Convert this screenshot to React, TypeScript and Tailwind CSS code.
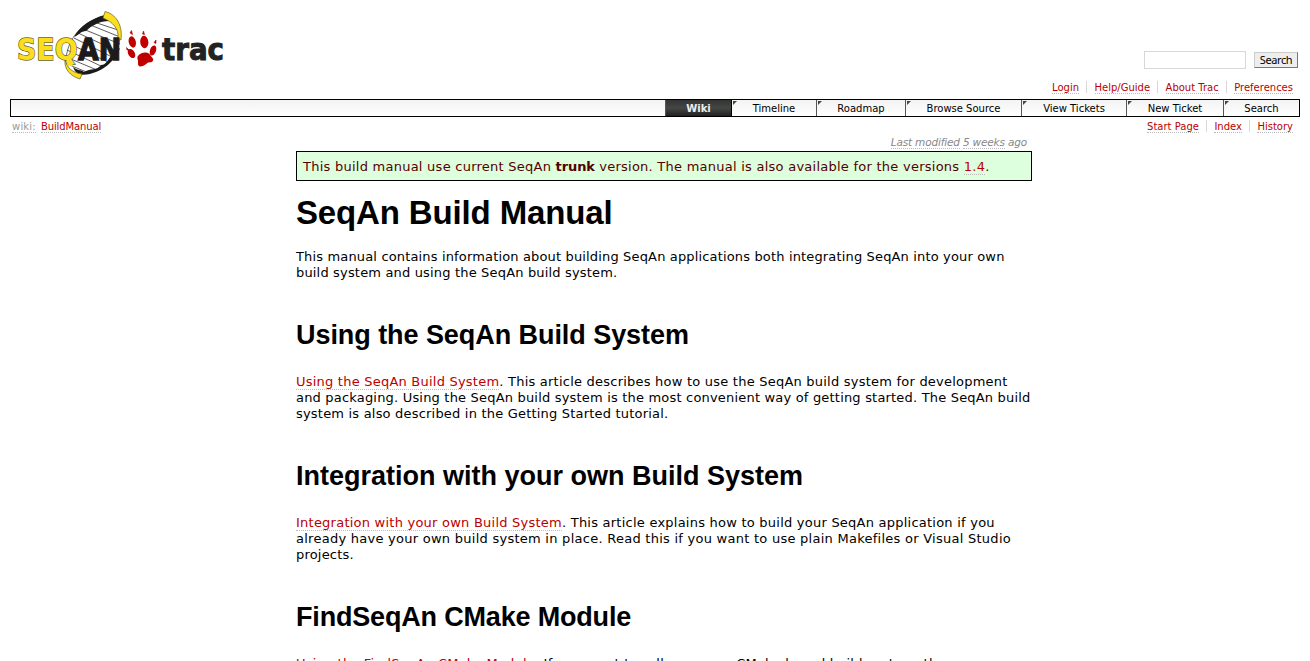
import type { ReactNode } from "react";

const link = "text-[#bb0000] border-b border-dotted border-[#bbbbbb]";

function Logo() {
  return (
    <svg className="block" width="240" height="99" viewBox="0 0 240 99">
      <path d="M66 62C66 40 82 21 105 16C112 18 118 25 120 34C120 56 106 70 79 74C72 73 67 68 66 62Z" fill="#fff" stroke="#333" strokeWidth=".7" />
      <path d="M94 22L118 30M88 24L120 37M83 29L120 44M78 33L117 51M74 38L112 57M70 44L108 62M67 50L103 67M66 57L97 70M67 64L89 73" stroke="#333" strokeWidth=".8" fill="none" />
      <path d="M74 37C80 26 92 18 105 15L110 21C99 21 91 26 86 31C81 31 79 35 74 37Z" fill="#1c1a1b" />
      <path d="M73 67C78 71 80 69 84 72C91 68 97 71 101 65C106 65 108 60 112 54L120 48C114 64 98 75 80 75C76 73 74 70 73 67Z" fill="#1c1a1b" />
      <path d="M105 11.500C116 14 123 25 121 40L118 38C119 29 113 22 103 18Z" fill="#fbdf1f" stroke="#66601f" strokeWidth=".7" />
      <text x="17" y="60" fontFamily="DejaVu Sans" fontWeight="700" fontSize="29.500" textLength="60.500" lengthAdjust="spacingAndGlyphs" fill="#fbdf1f" stroke="#66601f" strokeWidth="1.400" paintOrder="stroke">SEQ</text>
      <path d="M65 60C67 68 73 73 82 74L80 79C70 76 64 69 65 60Z" fill="#fbdf1f" stroke="#66601f" strokeWidth=".7" />
      <path d="M66 58L71 58L73 66L67.500 66Z" fill="#fbdf1f" />
      <text x="78" y="60" fontFamily="DejaVu Sans" fontWeight="700" fontSize="29.500" textLength="43" lengthAdjust="spacingAndGlyphs" fill="#1c1a1b" stroke="#1c1a1b" strokeWidth="1.300">AN</text>
      <g fill="#c00000">
        <ellipse cx="132.300" cy="42" rx="3.500" ry="5.800" transform="rotate(-15 132.300 42)" />
        <ellipse cx="144.300" cy="42" rx="4.100" ry="6.200" transform="rotate(-5 144.300 42)" />
        <ellipse cx="131.500" cy="53.500" rx="3.200" ry="5" transform="rotate(-32 131.500 53.500)" />
        <ellipse cx="153" cy="50.500" rx="3" ry="5.200" transform="rotate(20 153 50.500)" />
        <path d="M145 52.500C150 52 151 57 153 58.500C154 62 151 62.500 148 62.500C146 64 144 66.500 140.500 66.500C136.500 66 139 62 137.500 59C136.500 55.500 141 52.500 145 52.500Z" />
        <path d="M131.500 30.500L132.500 34.500L130 33ZM143.500 31L144.500 34.500L142.500 34ZM156 40L156 43.500L154 42.500ZM126.500 47.500L129 50L127 50Z" stroke="#c00000" strokeWidth=".6" />
      </g>
      <text x="162" y="59.500" fontFamily="DejaVu Sans" fontWeight="700" fontSize="31" textLength="62" lengthAdjust="spacingAndGlyphs" fill="#222" stroke="#222" strokeWidth="1">trac</text>
    </svg>
  );
}

function Links({ items }: { items: string[] }) {
  return (
    <div className="flex justify-end pr-[7px] text-[10px] leading-[13px]">
      {items.map((t, i) => (
        <span key={t} className={i ? "ml-[7px] h-[12px] border-l border-[#d7d7d7] pl-[7.5px]" : ""}>
          <a className={`inline-block h-[13px] ${link}`}>{t}</a>
        </span>
      ))}
    </div>
  );
}

const tabs = [
  ["Timeline", "w-[84px]"],
  ["Roadmap", "w-[89px]"],
  ["Browse Source", "w-[116px]"],
  ["View Tickets", "w-[105px]"],
  ["New Ticket", "w-[97px]"],
  ["Search", "w-[76px]"],
];

function Line({ tracking, children }: { tracking: string; children: ReactNode }) {
  return <span className={`block whitespace-nowrap ${tracking}`}>{children}</span>;
}

function H2({ tracking, children }: { tracking: string; children: ReactNode }) {
  return <h2 className={`mt-[38px] font-['Liberation_Sans',sans-serif] text-[27px] leading-[32px] font-bold whitespace-nowrap ${tracking}`}>{children}</h2>;
}

export default function App() {
  return (
    <div className="h-[661px] overflow-hidden bg-white font-['DejaVu_Sans',sans-serif] text-[13px] leading-[16px] text-black">
      <header className="flex h-[99px] justify-between">
        <Logo />
        <div className="flex flex-col pt-[51px] pr-[10px]">
          <form className="flex justify-end gap-2 pr-[2px]">
            <input className="h-[18px] w-[102px] border border-[#d7d7d7]" />
            <button type="button" className="mt-px h-[16px] w-[44px] border border-t-[#cccccc] border-r-[#777777] border-b-[#777777] border-l-[#cccccc] bg-[#eeeeee] font-['Noto_Sans',sans-serif] text-[11px] leading-[14px] tracking-[-0.4px]">Search</button>
          </form>
          <div className="mt-[12px]"><Links items={["Login", "Help/Guide", "About Trac", "Preferences"]} /></div>
        </div>
      </header>
      <nav className="mx-[10px] flex h-[18px] justify-end border border-black bg-linear-to-b from-[#f3f3f3] to-white text-[10px] leading-[17px]">
        <span className="w-[67px] border-x border-x-[#555555] border-r-black bg-linear-to-b from-[#333333] via-[#444744] to-[#222222] text-center font-bold text-[#eeeeee]">Wiki</span>
        {tabs.map(([t, w], i) => (
          <span key={t} className={`relative text-center ${w} ${i ? "border-l border-[#555555]" : ""}`}>
            <svg className="absolute top-[1px] left-[1px]" width="4" height="4"><path d="M0 0H4L0 4Z" fill="#444" /></svg>
            {t}
          </span>
        ))}
      </nav>
      <div className="flex h-[20px] justify-between px-[10px] pt-[3px] text-[10px] leading-[13px]">
        <div className="flex gap-[5px] pl-[2px] text-[#999999]"><span className="h-[13px] border-b border-dotted border-[#bbbbbb] tracking-[0.2px]">wiki:</span><a className={`h-[13px] tracking-[-0.1px] ${link}`}>BuildManual</a></div>
        <Links items={["Start Page", "Index", "History"]} />
      </div>
      <main className="ml-[296px] w-[736px]">
        <p className="h-[14px] pr-[5px] text-right text-[10.5px] leading-[11px] tracking-[-0.17px] text-[#888888] italic"><span className="inline-block border-b border-dotted border-[#bbbbbb]">Last modified</span> <span className="inline-block border-b border-dotted border-[#bbbbbb]">5 weeks</span> ago</p>
        <div className="h-[30px] border border-black bg-[#ddffdd] px-[6px] pt-[7px] tracking-[0.25px] whitespace-nowrap text-[#550000]">
          This build manual use current SeqAn <b className="tracking-[-0.1px]">trunk</b> version. The manual is also available for the versions <a className={link}>1.4</a>.
        </div>
        <h1 className="mt-[12px] font-['Liberation_Sans',sans-serif] text-[33px] leading-[40px] font-bold tracking-[-0.14px] whitespace-nowrap">SeqAn Build Manual</h1>
        <p className="mt-[16px]">
          <Line tracking="tracking-[0.155px]">This manual contains information about building SeqAn applications both integrating SeqAn into your own</Line>
          <Line tracking="tracking-[0.17px]">build system and using the SeqAn build system.</Line>
        </p>
        <H2 tracking="tracking-[-0.06px]">Using the SeqAn Build System</H2>
        <p className="mt-[23px]">
          <Line tracking="tracking-[0.225px]"><a className={link}>Using the SeqAn Build System</a>. This article describes how to use the SeqAn build system for development</Line>
          <Line tracking="tracking-[0.19px]">and packaging. Using the SeqAn build system is the most convenient way of getting started. The SeqAn build</Line>
          <Line tracking="tracking-[0.2px]">system is also described in the Getting Started tutorial.</Line>
        </p>
        <H2 tracking="tracking-[0px]">Integration with your own Build System</H2>
        <p className="mt-[23px]">
          <Line tracking="tracking-[0.235px]"><a className={link}>Integration with your own Build System</a>. This article explains how to build your SeqAn application if you</Line>
          <Line tracking="tracking-[0.26px]">already have your own build system in place. Read this if you want to use plain Makefiles or Visual Studio</Line>
          <Line tracking="tracking-[0.2px]">projects.</Line>
        </p>
        <H2 tracking="tracking-[-0.18px]">FindSeqAn CMake Module</H2>
        <p className="mt-[23px]"><Line tracking="tracking-[0.18px]"><a className={link}>Using the FindSeqAn CMake Module</a>. <span className="tracking-[0.35px]">If you want to roll your own </span>CMake-based build system, then</Line></p>
      </main>
    </div>
  );
}
